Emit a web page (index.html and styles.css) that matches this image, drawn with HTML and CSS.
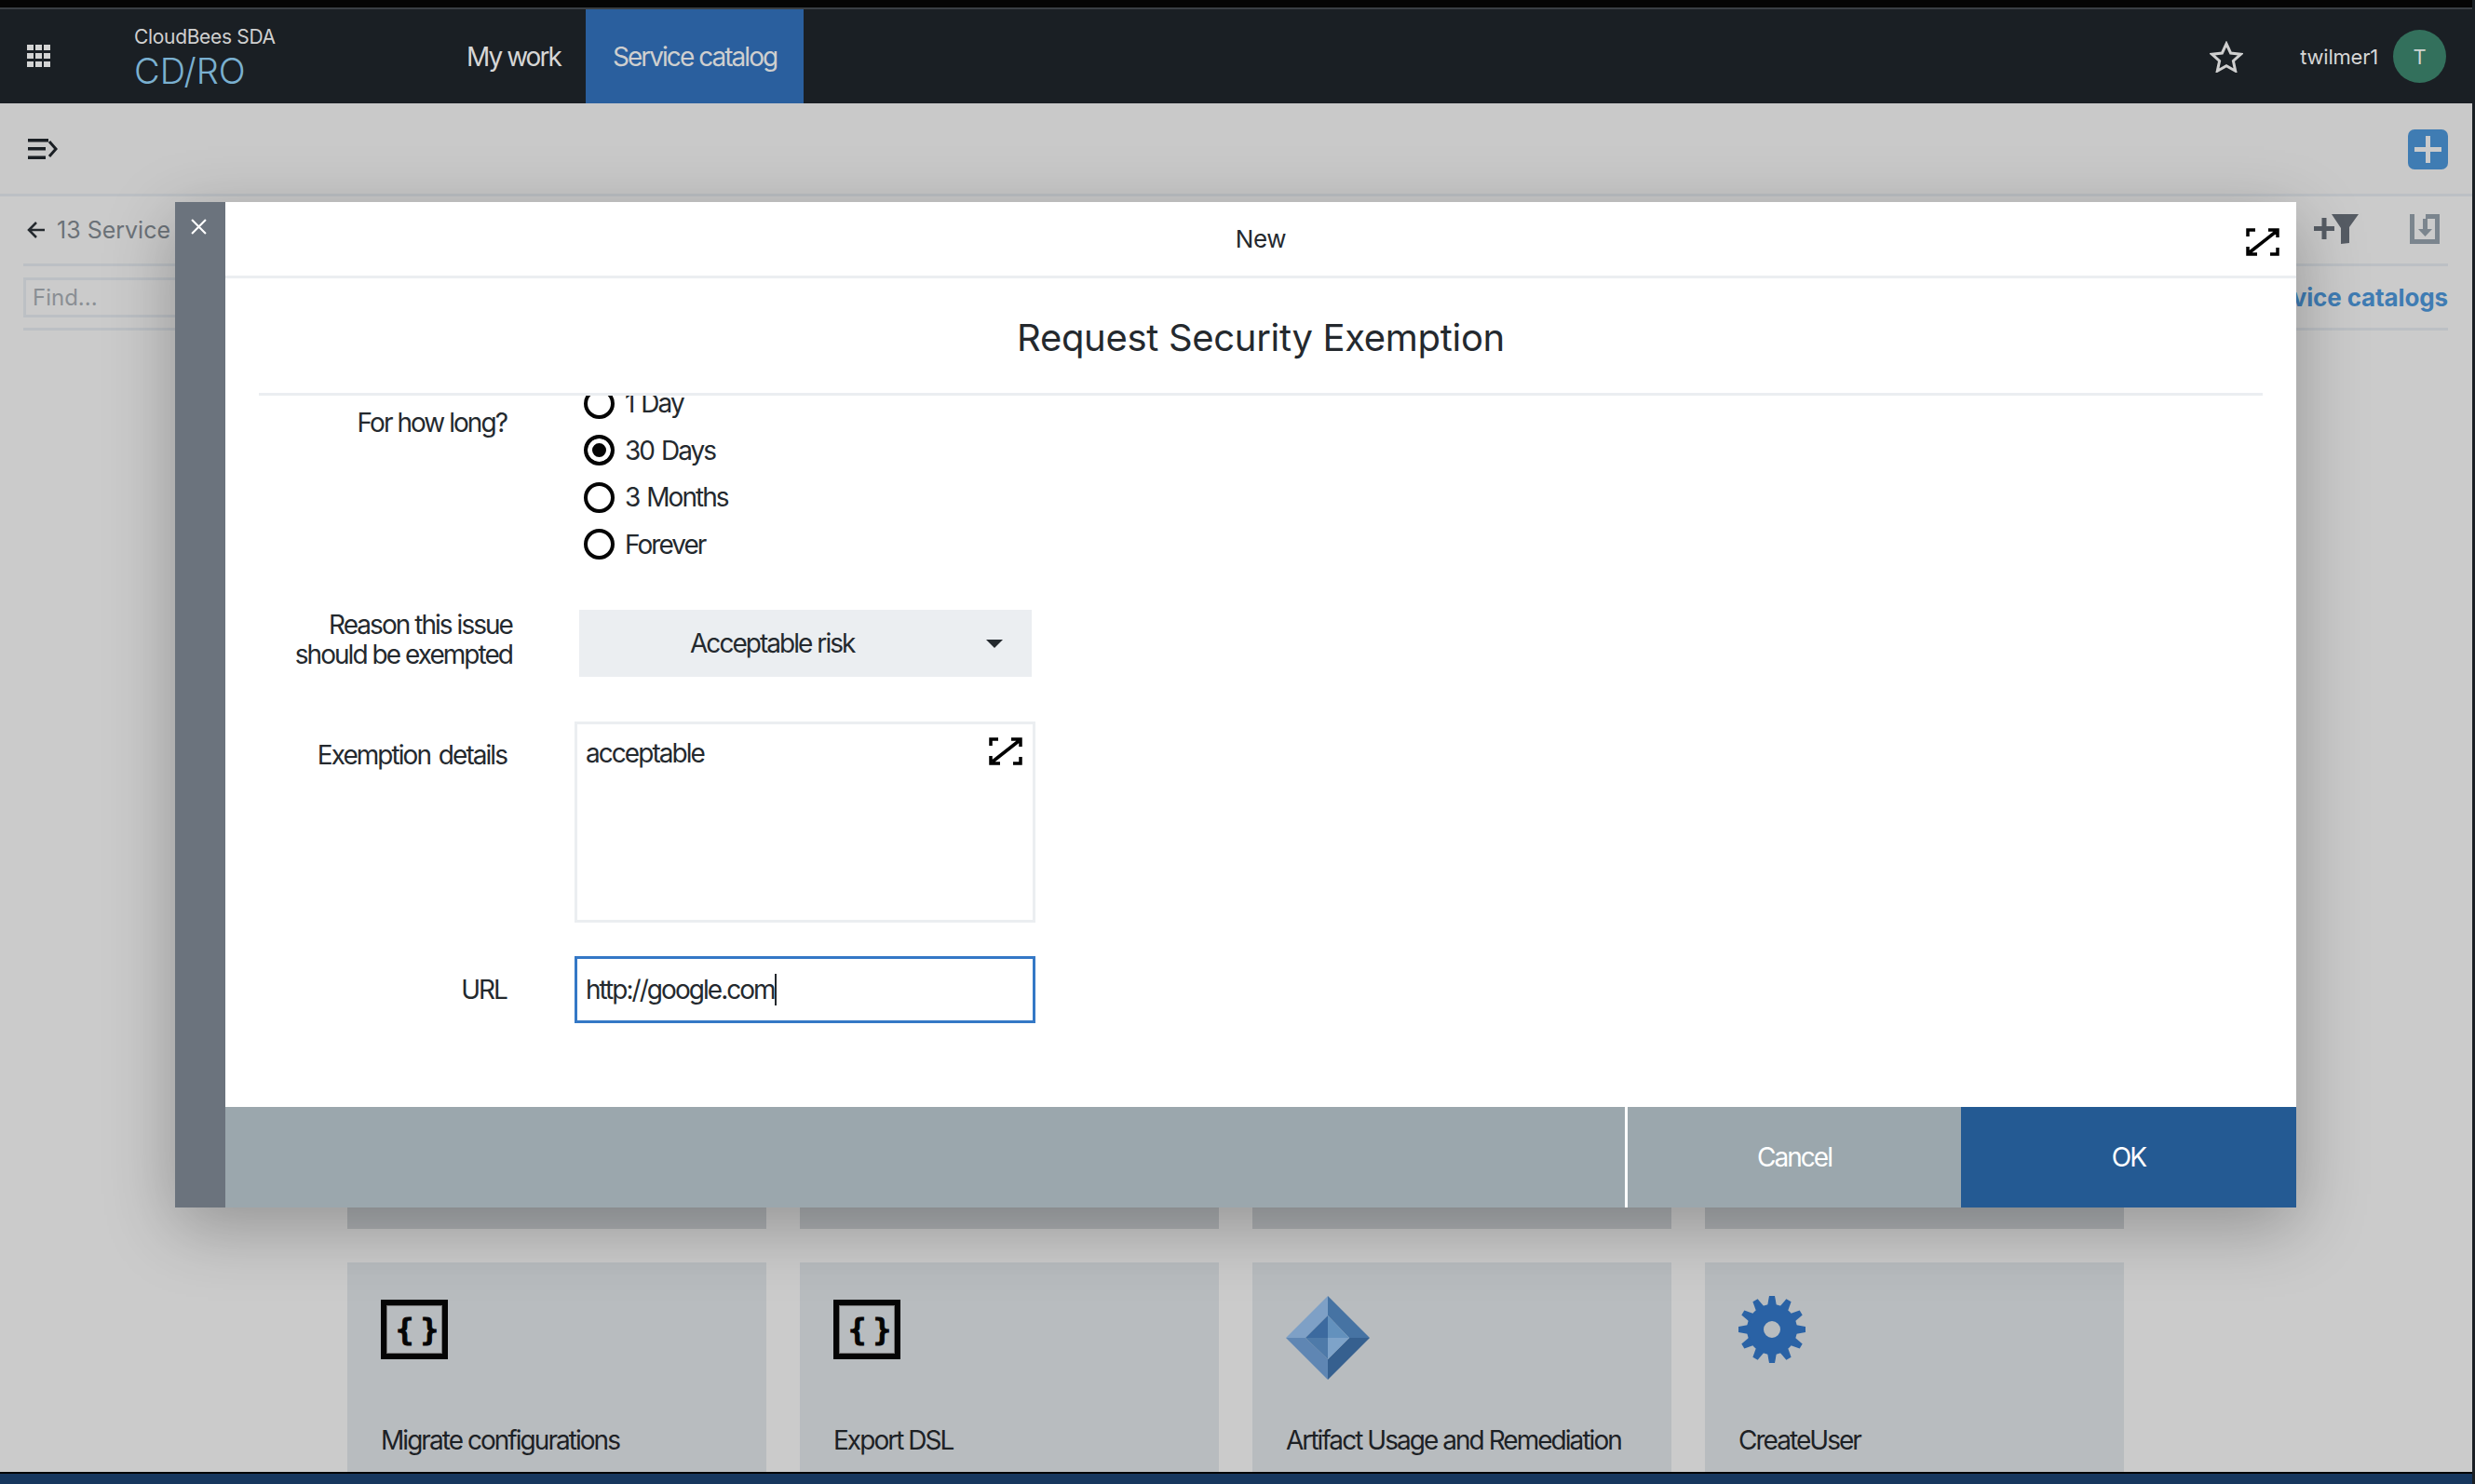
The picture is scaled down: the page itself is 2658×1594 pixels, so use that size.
FILE: index.html
```html
<!DOCTYPE html>
<html>
<head>
    <title>Service catalog</title>
    <link rel="stylesheet" href="styles.css">
</head>
<body>
    <div class="screen">
        <div class="top-strip"></div>

        <header class="app-bar">
            <svg class="grid-icon" viewBox="0 0 25 24">
                <path fill="#d4d4d4" d="M0 0h7v6H0zM9 0h7v6H9zM18 0h7v6h-7zM0 9h7v6H0zM9 9h7v6H9zM18 9h7v6h-7zM0 18h7v6H0zM9 18h7v6H9zM18 18h7v6h-7z"/>
            </svg>
            <div class="brand">
                <div class="brand-top">CloudBees SDA</div>
                <div class="brand-name">CD/RO</div>
            </div>
            <nav class="nav">
                <a class="nav-item">My work</a>
                <a class="nav-item active">Service catalog</a>
            </nav>
            <div class="user-area">
                <svg class="star-icon" viewBox="0 0 36 34">
                    <path fill="none" stroke="#cfcfcf" stroke-width="3" d="M18 3l4.600 10 10.900 1.200-8.100 7.300 2.300 10.700L18 26.800 8.300 32.200l2.300-10.700L2.500 14.200 13.400 13z"/>
                </svg>
                <span class="user-name">twilmer1</span>
                <span class="avatar">T</span>
            </div>
        </header>

        <div class="toolbar">
            <svg class="menu-icon" viewBox="0 0 32 22">
                <path fill="#1a1f24" d="M0 0h22v3.500H0zM0 9h19v3.500H0zM0 18.500h19V22H0z"/>
                <path fill="none" stroke="#1a1f24" stroke-width="3" d="M23 3l7 8-7 8"/>
            </svg>
            <span class="add-btn">
                <svg viewBox="0 0 29 29"><path fill="#cbcbcb" d="M12 0h5v12h12v5H17v12h-5V17H0v-5h12z"/></svg>
            </span>
        </div>

        <main class="catalog">
            <div class="catalog-head">
                <div class="head-row">
                    <div class="back">
                        <svg class="back-icon" viewBox="0 0 20 20">
                            <path fill="none" stroke="#24292e" stroke-width="2.500" d="M19 10H2M10 2l-8 8 8 8"/>
                        </svg>
                        <span>13 Service catalogs</span>
                    </div>
                    <div class="head-tools">
                        <svg class="filter-icon" viewBox="0 0 48 32">
                            <path fill="#565c64" d="M0 13h22v5H0zM8.500 4h5v23h-5z"/>
                            <path fill="#565c64" d="M19 0h29L38 14v17l-9 1V15z"/>
                        </svg>
                        <svg class="save-icon" viewBox="0 0 32 32">
                            <path fill="none" stroke="#7b858e" stroke-width="5" d="M2.500 0v29.500h27V2.500H17"/>
                            <path fill="#7b858e" d="M14 5h5v11h5l-7.500 8L9 16h5z"/>
                        </svg>
                    </div>
                </div>
                <div class="filter-row">
                    <div class="find">Find...</div>
                    <a class="all-link">All service catalogs</a>
                </div>
            </div>

            <div class="cards">
                <div class="card"></div>
                <div class="card"></div>
                <div class="card"></div>
                <div class="card"></div>
                <div class="card">
                    <div class="code-icon"><span>{ }</span></div>
                    <div class="card-title">Migrate configurations</div>
                </div>
                <div class="card">
                    <div class="code-icon"><span>{ }</span></div>
                    <div class="card-title">Export DSL</div>
                </div>
                <div class="card">
                    <svg class="gem-icon" viewBox="0 0 90 90">
                        <path fill="#7ea0c6" d="M45 0L0 45h21L45 21z"/>
                        <path fill="#4673a3" d="M45 0l45 45H68L45 21z"/>
                        <path fill="#5f86b3" d="M0 45l45 45V68L21 45z"/>
                        <path fill="#36608f" d="M90 45L45 90V68l23-23z"/>
                        <path fill="#3c6a9f" d="M45 21L21 45h24z"/>
                        <path fill="#6391bd" d="M45 21l23 24H45z"/>
                        <path fill="#4e7aa9" d="M21 45l24 23V45z"/>
                        <path fill="#7ea3c9" d="M68 45L45 68V45z"/>
                    </svg>
                    <div class="card-title">Artifact Usage and Remediation</div>
                </div>
                <div class="card">
                    <svg class="gear-icon" viewBox="0 0 72 72">
                        <circle cx="36" cy="36" r="18" fill="none" stroke="#2a62a5" stroke-width="18"/>
                        <g fill="#2a62a5">
                            <path id="tooth" d="M31 11L33 0h6l2 11z"/>
                            <use href="#tooth" transform="rotate(30 36 36)"/>
                            <use href="#tooth" transform="rotate(60 36 36)"/>
                            <use href="#tooth" transform="rotate(90 36 36)"/>
                            <use href="#tooth" transform="rotate(120 36 36)"/>
                            <use href="#tooth" transform="rotate(150 36 36)"/>
                            <use href="#tooth" transform="rotate(180 36 36)"/>
                            <use href="#tooth" transform="rotate(210 36 36)"/>
                            <use href="#tooth" transform="rotate(240 36 36)"/>
                            <use href="#tooth" transform="rotate(270 36 36)"/>
                            <use href="#tooth" transform="rotate(300 36 36)"/>
                            <use href="#tooth" transform="rotate(330 36 36)"/>
                        </g>
                    </svg>
                    <div class="card-title">CreateUser</div>
                </div>
            </div>
        </main>

        <div class="bottom-bar"></div>

        <div class="modal">
            <div class="modal-rail">
                <svg class="close-icon" viewBox="0 0 16 16">
                    <path fill="none" stroke="#fff" stroke-width="2" d="M1 1l14 14M15 1L1 15"/>
                </svg>
            </div>
            <div class="modal-main">
                <div class="modal-top">
                    <span>New</span>
                    <svg class="expand-icon top-expand" viewBox="0 0 36 30">
                        <path fill="none" stroke="#000" stroke-width="3.500" d="M10 2H2v7M26 28h8v-7M4 26L32 4M24 2h10v8M12 28H2v-8"/>
                    </svg>
                </div>
                <h1 class="form-title">Request Security Exemption</h1>
                <div class="form-body">
                    <div class="form-row duration-row">
                        <div class="form-label duration-label">For how long?</div>
                        <div class="radios">
                            <div class="radio-item"><span class="radio"></span>1 Day</div>
                            <div class="radio-item"><span class="radio checked"></span>30 Days</div>
                            <div class="radio-item"><span class="radio"></span>3 Months</div>
                            <div class="radio-item"><span class="radio"></span>Forever</div>
                        </div>
                    </div>
                    <div class="form-row reason-row">
                        <div class="form-label reason-label">Reason this issue<br>should be exempted</div>
                        <div class="select-box">
                            <span>Acceptable risk</span>
                            <span class="caret"></span>
                        </div>
                    </div>
                    <div class="form-row details-row">
                        <div class="form-label details-label">Exemption details</div>
                        <div class="text-box">
                            <span>acceptable</span>
                            <svg class="expand-icon" viewBox="0 0 36 30">
                                <path fill="none" stroke="#000" stroke-width="3.500" d="M10 2H2v7M26 28h8v-7M4 26L32 4M24 2h10v8M12 28H2v-8"/>
                            </svg>
                        </div>
                    </div>
                    <div class="form-row url-row">
                        <div class="form-label">URL</div>
                        <div class="url-box"><span>http://google.com</span><i class="text-caret"></i></div>
                    </div>
                </div>
                <div class="modal-footer">
                    <div class="footer-space"></div>
                    <button class="btn-cancel">Cancel</button>
                    <button class="btn-ok">OK</button>
                </div>
            </div>
        </div>
    </div>
</body>
</html>
```

FILE: styles.css
```css
* {
    box-sizing: border-box;
}

html, body {
    margin: 0;
    height: 100%;
    overflow: hidden;
}

body {
    font-family: Inter, "Noto Sans", sans-serif;
    color: #24292e;
    letter-spacing: -0.02em;
    background-color: #cbcbcb;
}

.screen {
    position: relative;
    display: flex;
    flex-direction: column;
    height: 1594px;
    border-right: 3px solid #1a1f24;
    background-color: #cbcbcb;
}

.top-strip {
    height: 10px;
    flex: none;
    background-color: #050505;
    border-bottom: 2px solid #3a3f44;
}

/* app bar */
.app-bar {
    display: flex;
    align-items: stretch;
    height: 101px;
    flex: none;
    background-color: #1a1f24;
    color: #d6d6d6;
}

.grid-icon {
    width: 25px;
    height: 24px;
    margin: 38px 0 0 29px;
}

.brand {
    width: 329px;
    margin-left: 90px;
    padding-top: 17px;
}

.brand-top {
    font-size: 21px;
    line-height: 26px;
    color: #d0d0d0;
}

.brand-name {
    font-size: 38px;
    line-height: 46px;
    font-weight: 300;
    color: #7ab0d0;
    letter-spacing: 0;
}

.nav {
    display: flex;
}

.nav-item {
    display: flex;
    align-items: center;
    padding: 0 27px 0 28px;
    font-size: 28px;
    letter-spacing: -0.07em;
}

.nav-item.active {
    width: 234px;
    padding: 0 0 0 29px;
    background-color: #2a5f9e;
    color: #cfcfcf;
}

.user-area {
    display: flex;
    align-items: center;
    margin-left: auto;
    padding-right: 28px;
}

.star-icon {
    width: 36px;
    height: 34px;
    margin-right: 61px;
}

.user-name {
    font-size: 22px;
    letter-spacing: -0.01em;
    margin-right: 16px;
}

.avatar {
    display: flex;
    align-items: center;
    justify-content: center;
    width: 57px;
    height: 57px;
    border-radius: 50%;
    background-color: #33705c;
    font-size: 22px;
    color: #cfd4d2;
}

/* toolbar */
.toolbar {
    display: flex;
    align-items: center;
    justify-content: space-between;
    height: 100px;
    flex: none;
    padding: 1px 26px 0 30px;
    background-color: #c9c9c9;
    border-bottom: 3px solid #bcc0c4;
}

.menu-icon {
    width: 32px;
    height: 22px;
}

.add-btn {
    display: flex;
    align-items: center;
    justify-content: center;
    width: 43px;
    height: 43px;
    border-radius: 7px;
    background-color: #3f7cb3;
}

.add-btn svg {
    width: 29px;
    height: 29px;
}

/* catalog behind the dialog */
.catalog {
    flex: 1;
    min-height: 0;
    overflow: hidden;
}

.catalog-head {
    padding: 0 26px 0 25px;
}

.head-row {
    display: flex;
    align-items: center;
    justify-content: space-between;
    height: 75px;
    border-bottom: 3px solid #bcc0c4;
}

.back {
    display: flex;
    align-items: center;
    gap: 12px;
    padding-left: 4px;
    font-size: 25px;
    letter-spacing: 0;
    color: #6b7278;
    white-space: nowrap;
}

.back-icon {
    width: 20px;
    height: 20px;
}

.head-tools {
    display: flex;
    align-items: center;
    gap: 55px;
    padding: 0 9px 3px 0;
}

.filter-icon {
    width: 48px;
    height: 32px;
}

.save-icon {
    width: 32px;
    height: 32px;
}

.filter-row {
    display: flex;
    align-items: center;
    justify-content: space-between;
    height: 69px;
    border-bottom: 3px solid #bcc0c4;
}

.find {
    width: 400px;
    height: 43px;
    padding: 4px 7px;
    border: 3px solid #bcc0c4;
    font-size: 24px;
    letter-spacing: 0;
    color: #8a8f94;
}

.all-link {
    font-size: 26px;
    font-weight: 700;
    letter-spacing: -0.005em;
    color: #3f7cb3;
}

.cards {
    display: grid;
    grid-template-columns: repeat(4, 450px);
    grid-auto-rows: 225px;
    column-gap: 36px;
    row-gap: 36px;
    margin-top: 740px;
    padding-left: 373px;
}

.card {
    position: relative;
    padding: 40px 36px 0;
    background-color: #b8bcbf;
}

.card:nth-child(-n+4) {
    background-color: #adb0b3;
}

.card-title {
    position: absolute;
    left: 36px;
    top: 174px;
    font-size: 28px;
    line-height: 34px;
    letter-spacing: -0.07em;
    white-space: nowrap;
    color: #1d2125;
}

.code-icon {
    display: flex;
    align-items: center;
    justify-content: center;
    width: 72px;
    height: 64px;
    border: 6px solid #050505;
    outline: 1px solid #777;
    outline-offset: -7px;
}

.code-icon span {
    font-family: "DejaVu Sans Mono", monospace;
    font-size: 32px;
    font-weight: 700;
    letter-spacing: -6px;
    color: #050505;
    -webkit-text-stroke: 1px #050505;
}

.gem-icon {
    display: block;
    width: 90px;
    height: 90px;
    margin-top: -4px;
}

.gear-icon {
    display: block;
    width: 72px;
    height: 72px;
    margin-top: -4px;
}

.bottom-bar {
    height: 13px;
    flex: none;
    background-color: #17375e;
    border-top: 2px solid #050505;
}

/* dialog */
.modal {
    position: absolute;
    left: 188px;
    top: 217px;
    display: flex;
    width: 2278px;
    height: 1080px;
    box-shadow: 0 20px 70px rgba(0, 0, 0, 0.28);
}

.modal-rail {
    width: 54px;
    flex: none;
    padding: 18px 0 0 17px;
    background-color: #6b737d;
}

.close-icon {
    display: block;
    width: 17px;
    height: 17px;
}

.modal-main {
    position: relative;
    display: flex;
    flex-direction: column;
    flex: 1;
    min-width: 0;
    background-color: #fff;
}

.modal-top {
    display: flex;
    align-items: center;
    justify-content: center;
    height: 82px;
    flex: none;
    border-bottom: 3px solid #ebeef1;
    font-size: 26px;
}

.top-expand {
    position: absolute;
    top: 28px;
    right: 18px;
}

.expand-icon {
    width: 36px;
    height: 30px;
}

.form-title {
    height: 126px;
    flex: none;
    margin: 0 36px;
    border-bottom: 3px solid #ebeef1;
    font-size: 40px;
    line-height: 128px;
    font-weight: 400;
    text-align: center;
    letter-spacing: -0.008em;
}

.form-body {
    flex: 1;
    min-height: 0;
    overflow: hidden;
    font-size: 28px;
    letter-spacing: -0.07em;
}

.form-row {
    display: flex;
}

.form-label {
    width: 302px;
    flex: none;
    text-align: right;
}

.duration-label {
    padding-top: 12px;
}

.radios {
    margin: -8px 0 0 83px;
}

.radio-item {
    display: flex;
    align-items: center;
    height: 32px;
    margin-bottom: 18.500px;
    gap: 11px;
    word-spacing: 2px;
}

.radio {
    width: 33px;
    height: 33px;
    flex: none;
    border: 4px solid #050505;
    border-radius: 50%;
    background-color: #fff;
}

.radio.checked {
    background-color: #050505;
    box-shadow: inset 0 0 0 5px #fff;
}

.reason-row {
    margin-top: 36px;
}

.reason-label {
    width: 308px;
    line-height: 32px;
}

.select-box {
    position: relative;
    display: flex;
    align-items: center;
    width: 486px;
    height: 72px;
    margin-left: 72px;
    padding-left: 119px;
    background-color: #ebeef1;
}

.caret {
    position: absolute;
    right: 31px;
    top: 32px;
    border-top: 9px solid #24292e;
    border-left: 9px solid transparent;
    border-right: 9px solid transparent;
}

.details-row {
    margin-top: 48px;
}

.details-label {
    padding-top: 19px;
    word-spacing: 3px;
}

.text-box {
    position: relative;
    width: 495px;
    height: 216px;
    margin-left: 73px;
    padding: 14px 9px;
    border: 3px solid #ebeef1;
}

.text-box .expand-icon {
    position: absolute;
    right: 11px;
    top: 14px;
}

.url-row {
    align-items: center;
    margin-top: 36px;
}

.url-box {
    display: flex;
    align-items: center;
    width: 495px;
    height: 72px;
    margin-left: 73px;
    padding-left: 9px;
    border: 3px solid #3478c6;
}

.text-caret {
    width: 2px;
    height: 34px;
    background-color: #24292e;
}

.modal-footer {
    display: flex;
    height: 108px;
    flex: none;
    background-color: #9ba7ad;
}

.footer-space {
    width: 1506px;
    border-right: 3px solid #fff;
}

.btn-cancel, .btn-ok {
    border: none;
    color: #fff;
    font-family: Inter, "Noto Sans", sans-serif;
    font-size: 28px;
    letter-spacing: -0.07em;
}

.btn-cancel {
    width: 358px;
    background-color: #9ba7ad;
}

.btn-ok {
    width: 360px;
    background-color: #245a93;
}
```
